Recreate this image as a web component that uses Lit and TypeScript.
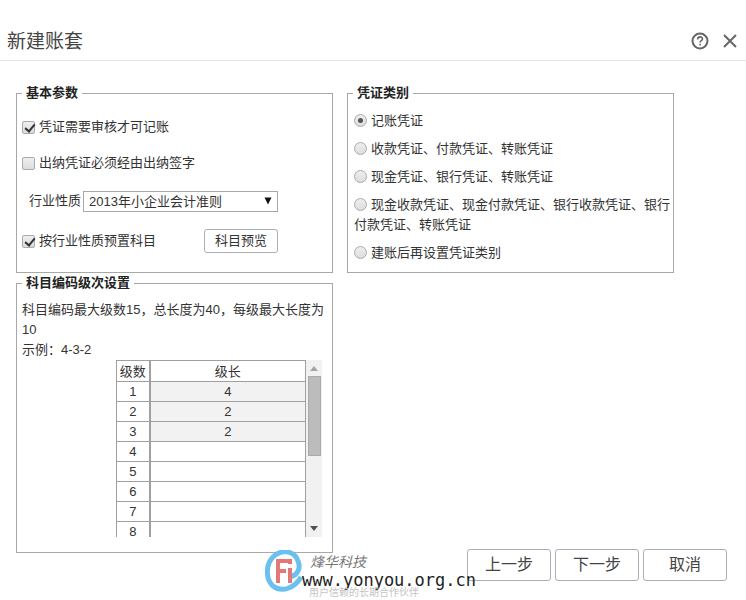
import { LitElement, html, css } from "lit";
import { customElement, state } from "lit/decorators.js";

const VOUCHER_TYPES = [
  "记账凭证",
  "收款凭证、付款凭证、转账凭证",
  "现金凭证、银行凭证、转账凭证",
  "现金收款凭证、现金付款凭证、银行收款凭证、银行付款凭证、转账凭证",
  "建账后再设置凭证类别",
];

const LEVELS = ["4", "2", "2", "", "", "", "", ""];

@customElement("app-root")
export class AppRoot extends LitElement {
  @state() private voucher = 0;

  static styles = css`
    :host {
      display: block;
      padding-top: 20px;
      background: #fff;
      color: #333;
      font: 13px/20px "Liberation Sans", "Noto Sans CJK SC", sans-serif;
    }
    * { box-sizing: border-box; }
    button, select, input { font: inherit; color: inherit; margin: 0; }

    .header {
      display: flex;
      align-items: center;
      height: 41px;
      padding: 2px 7px 0;
      border-bottom: 1px solid #e4e4e4;
    }
    .title { flex: 1; margin: 0; font-size: 19px; line-height: 24px; padding-top: 2px; font-weight: 400; color: #444; }
    .tool { display: flex; padding: 0; border: 0; background: none; margin-left: 12px; color: #666; }

    .body {
      display: grid;
      grid-template-columns: 317fr 327fr;
      column-gap: 14px;
      padding: 22px 72px 0 16px;
    }
    .group { min-width: 0; margin: 0; padding: 0 1px 0 5px; border: 1px solid #a8a8a8; }
    .group legend { padding: 0 4px; font-weight: 700; color: #222; }

    .params { padding-bottom: 11px; padding-top: 6px; }
    .row { display: flex; align-items: center; height: 36px; }
    .row.tall { height: 40px; }
    .row label { display: flex; align-items: center; }

    .check, .radio {
      appearance: none;
      position: relative;
      width: 13px;
      height: 13px;
      margin-right: 4px;
      border: 1px solid #aaa;
      background: linear-gradient(#eee, #ddd);
      flex: none;
    }
    .check { border-radius: 2px; }
    .check:checked::after {
      content: "";
      position: absolute;
      left: 4px;
      top: 0;
      width: 4px;
      height: 8px;
      border: solid #333;
      border-width: 0 2px 2px 0;
      transform: rotate(40deg);
    }
    .radio { border-radius: 50%; vertical-align: -2px; }
    .radio:checked::after {
      content: "";
      position: absolute;
      inset: 3px;
      border-radius: 50%;
      background: #555;
    }

    .picker { display: grid; flex: 1; align-items: center; margin: 0 53px 0 2px; }
    .picker > * { grid-area: 1 / 1; }
    .select {
      appearance: none;
      width: 100%;
      height: 21px;
      padding: 0 5px;
      border: 1px solid #a8a8a8;
      border-radius: 0;
      background: #fff;
    }
    .arrow { justify-self: end; margin-right: 6px; pointer-events: none; }
    .indent { margin-left: 7px; }
    .preview {
      width: 74px;
      height: 24px;
      margin: 0 53px 0 auto;
      padding: 0;
      border: 1px solid #aaaeb6;
      border-radius: 3px;
      background: #fff;
    }

    .types { display: flex; flex-direction: column; gap: 8px; padding: 8px 0 0 1px; }

    .levels { padding-top: 7px; padding-bottom: 15px; }
    .text { margin: 0; }
    .list { display: flex; width: 206px; height: 177px; margin: 0 9px 0 auto; overflow: hidden; }
    .table { flex: 1; height: max-content; border-collapse: collapse; text-align: center; }
    .table th, .table td { height: 20px; padding: 0; border: 1px solid #a0a0a0; line-height: 19px; font-weight: 400; }
    .table th { height: 21px; }
    .table .no { width: 33px; border-right: 2px solid #a0a0a0; background: #fff; }
    .table .filled { background: #f2f2f2; }
    .bar {
      display: flex;
      flex-direction: column;
      align-items: center;
      width: 16px;
      padding: 6px 0;
      background: #f1f1f1;
    }
    .thumb { width: 13px; height: 80px; margin: 5px 0 auto; border: 1px solid #aaa; background: #bcbcbc; }

    .footer {
      position: relative;
      display: flex;
      justify-content: flex-end;
      gap: 4px;
      margin-top: -4px;
      padding: 0 19px 19px;
    }
    .step {
      width: 84px;
      height: 32px;
      padding: 0;
      border: 1px solid #aaaeb6;
      border-radius: 3px;
      background: #fff;
      font-size: 16px;
      color: #444;
    }
    .mark { position: absolute; right: 270px; top: 1px; display: flex; pointer-events: none; }
    .logo { margin-right: -1px; }
    .words { display: flex; flex-direction: column; }
    .brand { margin-left: 8px; font-size: 14px; line-height: 24px; font-style: italic; color: #777; }
    .url { font: 17px/13px "DejaVu Sans Mono", monospace; color: #222; }
    .slogan { margin: 0 0 0 7px; font-size: 10px; line-height: 12px; color: #c4c4c4; }
  `;

  render() {
    return html`
      <header class="header">
        <h1 class="title">新建账套</h1>
        <button class="tool" aria-label="帮助">
          <svg width="18" height="18" viewBox="0 0 18 18" fill="none" stroke="currentColor" stroke-width="2">
            <circle cx="9" cy="9" r="7.5" />
            <path d="M6.6 7.4c0-3.4 4.9-3.2 4.9-.4 0 1.7-2.4 1.7-2.4 3.5M9.1 11.8v1.8" stroke-width="1.6" />
          </svg>
        </button>
        <button class="tool" aria-label="关闭">
          <svg width="18" height="18" viewBox="0 0 18 18" fill="none" stroke="currentColor" stroke-width="2">
            <path d="M3 3l12 12M15 3L3 15" />
          </svg>
        </button>
      </header>

      <main class="body">
        <fieldset class="group params">
          <legend>基本参数</legend>
          <div class="row">
            <label><input class="check" type="checkbox" checked />凭证需要审核才可记账</label>
          </div>
          <div class="row">
            <label><input class="check" type="checkbox" />出纳凭证必须经由出纳签字</label>
          </div>
          <div class="row tall">
            <label class="indent" for="industry">行业性质</label>
            <div class="picker">
              <select class="select" id="industry">
                <option>2013年小企业会计准则</option>
              </select>
              <svg class="arrow" width="8" height="8" viewBox="0 0 8 8"><path d="M0.5 0.5h7L4 7.5z" fill="#111" /></svg>
            </div>
          </div>
          <div class="row tall">
            <label><input class="check" type="checkbox" checked />按行业性质预置科目</label>
            <button class="preview">科目预览</button>
          </div>
        </fieldset>

        <fieldset class="group">
          <legend>凭证类别</legend>
          <div class="types">
            ${VOUCHER_TYPES.map(
              (name, i) => html`<label
                ><input
                  class="radio"
                  type="radio"
                  name="voucher"
                  .checked=${this.voucher === i}
                  @change=${() => (this.voucher = i)}
                />${name}</label
              >`
            )}
          </div>
        </fieldset>

        <fieldset class="group levels">
          <legend>科目编码级次设置</legend>
          <p class="text">科目编码最大级数15，总长度为40，每级最大长度为10</p>
          <p class="text">示例：4-3-2</p>
          <div class="list">
            <table class="table">
              <thead>
                <tr><th class="no">级数</th><th>级长</th></tr>
              </thead>
              <tbody>
                ${LEVELS.map(
                  (len, i) => html`<tr>
                    <td class="no">${i + 1}</td>
                    <td class=${len ? "filled" : ""}>${len}</td>
                  </tr>`
                )}
              </tbody>
            </table>
            <div class="bar">
              <svg width="8" height="5" viewBox="0 0 8 5"><path d="M0 5L4 0l4 5z" fill="#a5a5a5" /></svg>
              <div class="thumb"></div>
              <svg width="8" height="5" viewBox="0 0 8 5"><path d="M0 0l4 5 4-5z" fill="#505050" /></svg>
            </div>
          </div>
        </fieldset>
      </main>

      <footer class="footer">
        <button class="step">上一步</button>
        <button class="step">下一步</button>
        <button class="step">取消</button>
        <div class="mark">
          <svg class="logo" width="38" height="44" viewBox="0 0 38 44" fill="none">
            <path d="M25 27C33 25 36 18 33 11C29 0 16 -1 8 7C0 15 1 30 8 36C17 43 30 38 36 27" stroke="#6cc0f0" stroke-width="5" />
            <path d="M13 33V11H27M13 21H21M25 9V14M25 18V33" stroke="#e27878" stroke-width="4" />
          </svg>
          <div class="words">
            <span class="brand">烽华科技</span>
            <span class="url">www.yonyou.org.cn</span>
            <span class="slogan">用户信赖的长期合作伙伴</span>
          </div>
        </div>
      </footer>
    `;
  }
}
